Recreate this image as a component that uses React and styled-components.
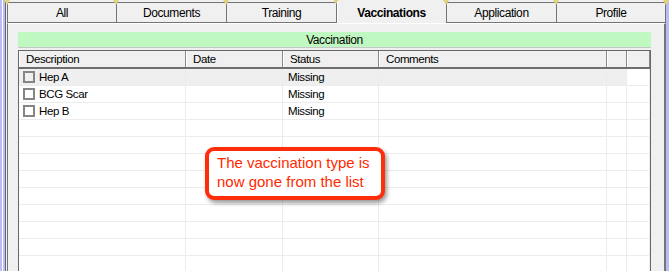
import React from "react";
import styled, { createGlobalStyle } from "styled-components";

const GlobalStyle = createGlobalStyle`
  html, body {
    margin: 0;
    padding: 0;
    background: #bcbcf4;
  }
`;

const Page = styled.div`
  position: relative;
  display: flex;
  height: 271px;
  overflow: hidden;
  padding-left: 5px;
  background: linear-gradient(
    to right,
    #bcbcf4 0 2px,
    #ffffff 2px 3px,
    #bcbcf4 3px
  );
  font-family: "Liberation Sans", Arial, sans-serif;
  font-size: 11.5px;
  letter-spacing: -0.4px;
  color: #000;
`;

const Window = styled.div`
  border-left: 1px solid #686868;
  padding-left: 1px;
  background: #f0f0f0;
  display: flex;
  flex-direction: column;
  width: 659px;
`;

const TabStrip = styled.div`
  display: flex;
  align-items: flex-start;
  height: 23px;
`;

const Tab = styled.div`
  position: relative;
  box-sizing: border-box;
  width: ${({ $w }) => $w}px;
  height: ${({ $active }) => ($active ? 23 : 21)}px;
  margin-top: ${({ $active }) => ($active ? 0 : 2)}px;
  border-top: ${({ $active }) => ($active ? "none" : "1px solid #747474")};
  border-left: 1px solid #747474;
  border-right: ${({ $last }) => ($last ? "1px solid #747474" : "none")};
  border-bottom: ${({ $active }) => ($active ? "none" : "1px solid #747474")};
  background: #f0f0f0;
  display: flex;
  align-items: center;
  justify-content: center;
  padding-top: ${({ $active }) => ($active ? 2 : 0)}px;
  font-weight: ${({ $active }) => ($active ? "bold" : "normal")};
  font-size: 12px;
  box-shadow: ${({ $active }) => ($active ? "inset 1px 0 0 #ffffff" : "none")};

  &::before {
    content: "";
    position: absolute;
    top: ${({ $active }) => ($active ? -1 : -3)}px;
    left: -4px;
    border-left: 3px solid transparent;
    border-right: 3px solid transparent;
    border-top: 5px solid #e2d27a;
  }

  &::after {
    content: "";
    display: ${({ $last }) => ($last ? "block" : "none")};
    position: absolute;
    top: -3px;
    right: -4px;
    border-left: 3px solid transparent;
    border-right: 3px solid transparent;
    border-top: 5px solid #e2d27a;
  }
`;

const Panel = styled.div`
  flex: 1;
  box-sizing: border-box;
  border-top: 1px solid #ffffff;
  border-left: 1px solid #747474;
  border-right: 2px solid #767676;
  padding: 8px 13px 0 10px;
  display: flex;
  flex-direction: column;
  overflow: hidden;
`;

const TitleBar = styled.div`
  height: 15px;
  background: #c0f8c2;
  border-bottom: 1px solid #c8c8c8;
  margin-bottom: 2px;
  display: flex;
  align-items: center;
  justify-content: center;
  font-size: 12px;
`;

const Grid = styled.div`
  flex: 1;
  border: 1px solid #686868;
  border-bottom: none;
  background: #ffffff;
  overflow: hidden;
`;

const COLS = "167px 97px 96px 228px 20px 23px";

const HeaderRow = styled.div`
  display: grid;
  grid-template-columns: ${COLS};
  height: 18px;
  box-sizing: border-box;
  border-bottom: 2px solid #6e6e6e;
  background: #f0f0f0;
`;

const HeaderCell = styled.div`
  box-sizing: border-box;
  border-left: 1px solid #ffffff;
  border-right: 1px solid #8a8a8a;
  padding: 0 6px;
  display: flex;
  align-items: center;
  white-space: nowrap;
`;

const Row = styled.div`
  display: grid;
  grid-template-columns: ${COLS};
  height: 17px;
  box-sizing: border-box;
  border-bottom: 1px solid #ececec;
`;

const Cell = styled.div`
  box-sizing: border-box;
  border-right: 1px solid #ececec;
  padding-left: ${({ $pad }) => $pad ?? 5}px;
  display: flex;
  align-items: center;
  gap: 4px;
  white-space: nowrap;
  background: ${({ $selected }) => ($selected ? "#efefef" : "#ffffff")};
`;

const Check = styled.span`
  box-sizing: border-box;
  width: 12px;
  height: 12px;
  border: 2px solid #858585;
  flex: none;
`;

const Callout = styled.div`
  position: absolute;
  left: 205px;
  top: 147px;
  width: 180px;
  height: 53px;
  box-sizing: border-box;
  border: 4px solid #ff2d0a;
  border-radius: 9px;
  background: #ffffff;
  box-shadow: 2px 3px 4px rgba(0, 0, 0, 0.4);
  padding: 2px 0 0 8px;
  font-family: "Liberation Sans", Arial, sans-serif;
  font-size: 15px;
  line-height: 19px;
  letter-spacing: 0;
  color: #ff2a00;
  z-index: 2;
`;

const tabs = [
  { label: "All", w: 109 },
  { label: "Documents", w: 110 },
  { label: "Training", w: 110 },
  { label: "Vaccinations", w: 110, active: true },
  { label: "Application", w: 110 },
  { label: "Profile", w: 110 },
];

const items = [
  { name: "Hep A", status: "Missing", selected: true },
  { name: "BCG Scar", status: "Missing" },
  { name: "Hep B", status: "Missing" },
];

const EMPTY_ROWS = 10;

export default function App() {
  const rows = [
    ...items,
    ...Array.from({ length: EMPTY_ROWS }, () => null),
  ];

  return (
    <>
      <GlobalStyle />
      <Page>
        <Window>
          <TabStrip>
            {tabs.map((t, i) => (
              <Tab
                key={t.label}
                $w={t.w}
                $active={t.active}
                $last={i === tabs.length - 1}
              >
                {t.label}
              </Tab>
            ))}
          </TabStrip>
          <Panel>
            <TitleBar>Vaccination</TitleBar>
            <Grid>
              <HeaderRow>
                <HeaderCell>Description</HeaderCell>
                <HeaderCell>Date</HeaderCell>
                <HeaderCell>Status</HeaderCell>
                <HeaderCell>Comments</HeaderCell>
                <HeaderCell />
                <HeaderCell />
              </HeaderRow>
              {rows.map((r, i) => (
                <Row key={i}>
                  <Cell $pad={4} $selected={r?.selected}>
                    {r && <Check />}
                    {r?.name}
                  </Cell>
                  <Cell $selected={r?.selected} />
                  <Cell $selected={r?.selected}>{r?.status}</Cell>
                  <Cell $selected={r?.selected} />
                  <Cell $selected={r?.selected} />
                  <Cell />
                </Row>
              ))}
            </Grid>
          </Panel>
        </Window>
        <Callout>
          The vaccination type is
          <br />
          now gone from the list
        </Callout>
      </Page>
    </>
  );
}
